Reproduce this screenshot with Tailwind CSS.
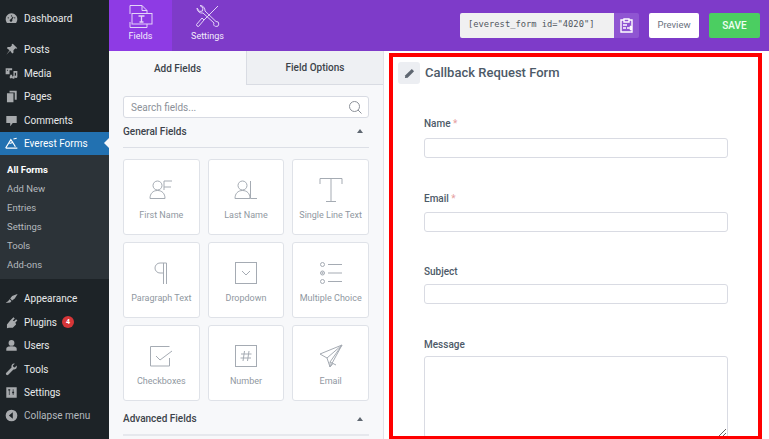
<!DOCTYPE html>
<html lang="en">
<head>
<meta charset="UTF-8">
<title>Everest Forms</title>
<script src="https://cdn.jsdelivr.net/npm/@tailwindcss/browser@4"></script>
</head>
<body class="bg-white font-['Roboto',sans-serif] overflow-hidden">
<div class="flex w-[769px] h-[439px] overflow-hidden">

  <!-- WP sidebar -->
  <aside class="w-[109px] shrink-0 bg-[#1d2327] text-[10px] text-[#e8eaeb] pt-[7.3px]">
    <a class="flex items-center h-[23.4px] pl-[5px] gap-[6px]">
      <svg class="w-[13px] h-[13px] text-[#a7aaad]" viewBox="0 0 20 20" fill="currentColor"><path d="M10 2a9 9 0 0 0-8 13l1 2h14l1-2a9 9 0 0 0-8-13zm0 3a1 1 0 1 1 0 2 1 1 0 0 1 0-2zM5 8a1 1 0 1 1 0 2 1 1 0 0 1 0-2zm10 0a1 1 0 1 1 0 2 1 1 0 0 1 0-2zm-3-1 1 1-2 4a2 2 0 1 1-2-1z"/></svg>
      Dashboard</a>
    <div class="h-[7.6px]"></div>
    <a class="flex items-center h-[23.4px] pl-[5px] gap-[6px]">
      <svg class="w-[13px] h-[13px] text-[#a7aaad]" viewBox="0 0 20 20" fill="currentColor"><path d="M12 1l7 7-2 1-1-1-3 3 0 4-2 1-3-4-6 6 5-7-4-3 1-2 4 0 3-3-1-1z"/></svg>
      Posts</a>
    <a class="flex items-center h-[23.4px] pl-[5px] gap-[6px]">
      <svg class="w-[13px] h-[13px] text-[#a7aaad]" viewBox="0 0 20 20" fill="currentColor"><path d="M1 2h10v3H7v6H1zm2 2v2l2-1zM13 6h6v9a2 2 0 1 1-2-2V9h-2v7a2 2 0 1 1-2-2zM8 12h3v3a2 2 0 1 1-3-1z"/></svg>
      Media</a>
    <a class="flex items-center h-[23.4px] pl-[5px] gap-[6px]">
      <svg class="w-[13px] h-[13px] text-[#a7aaad]" viewBox="0 0 20 20" fill="currentColor"><path d="M7 1h11v14h-3V4H7zM3 5h10v14H3z"/></svg>
      Pages</a>
    <a class="flex items-center h-[23.4px] pl-[5px] gap-[6px]">
      <svg class="w-[13px] h-[13px] text-[#a7aaad]" viewBox="0 0 20 20" fill="currentColor"><path d="M2 3h16v11h-6l-4 5v-5H2z"/></svg>
      Comments</a>
    <a class="relative flex items-center h-[23.4px] pl-[5px] gap-[6px] bg-[#2271b1] text-white">
      <svg class="w-[13px] h-[13px]" viewBox="0 0 20 20" fill="none" stroke="currentColor" stroke-width="1.8"><path d="M1 17 9 4l4 6 3 5M1 17h18M7 10l6-2M13 3l5-1"/></svg>
      Everest Forms
      <span class="absolute right-0 top-[6px] border-y-[5px] border-y-transparent border-r-[5px] border-r-[#f7f8fa]"></span></a>
    <div class="bg-[#2c3338] h-[124px] pt-[5px] text-[#b4b9be] text-[9.5px] pl-[7px]">
      <a class="flex items-center h-[19px] font-bold text-white">All Forms</a>
      <a class="flex items-center h-[19px]">Add New</a>
      <a class="flex items-center h-[19px]">Entries</a>
      <a class="flex items-center h-[19px]">Settings</a>
      <a class="flex items-center h-[19px]">Tools</a>
      <a class="flex items-center h-[19px]">Add-ons</a>
    </div>
    <div class="h-[8px]"></div>
    <a class="flex items-center h-[23.4px] pl-[5px] gap-[6px]">
      <svg class="w-[13px] h-[13px] text-[#a7aaad]" viewBox="0 0 20 20" fill="currentColor"><path d="M19 3l-8 3-3 4 3 3 4-3 4-6zM7 11l3 3-2 2-7 1 4-3z"/></svg>
      Appearance</a>
    <a class="flex items-center h-[23.4px] pl-[5px] gap-[6px]">
      <svg class="w-[13px] h-[13px] text-[#a7aaad]" viewBox="0 0 20 20" fill="currentColor"><path d="M13 2l2 2-3 3 2 1 3-3 2 2-3 3 1 3-5 5H6l-3 1v-6l5-6z"/></svg>
      <span class="flex items-center gap-[5px]">Plugins <span class="w-[12px] h-[12px] rounded-full bg-[#d63638] text-white text-[7px] font-bold flex items-center justify-center">4</span></span></a>
    <a class="flex items-center h-[23.4px] pl-[5px] gap-[6px]">
      <svg class="w-[13px] h-[13px] text-[#a7aaad]" viewBox="0 0 20 20" fill="currentColor"><circle cx="10" cy="6" r="4.5"/><path d="M2 18v-3c0-3 4-4 8-4s8 1 8 4v3z"/></svg>
      Users</a>
    <a class="flex items-center h-[23.4px] pl-[5px] gap-[6px]">
      <svg class="w-[13px] h-[13px] text-[#a7aaad]" viewBox="0 0 20 20" fill="currentColor"><path d="M18 4l-3 3-2-1-1-2 3-3c-3-1-6 2-5 6L2 15a2 2 0 0 0 3 3l8-8c4 1 6-3 5-6z"/></svg>
      Tools</a>
    <a class="flex items-center h-[23.4px] pl-[5px] gap-[6px]">
      <svg class="w-[13px] h-[13px] text-[#a7aaad]" viewBox="0 0 20 20" fill="currentColor"><path fill-rule="evenodd" d="M2 2h16v16H2zM5 5v2h1v7h1V7h1V5zm6 4v2h1v3h1v-3h1V9h-1V5h-1v4z"/></svg>
      Settings</a>
    <a class="flex items-center h-[23.4px] pl-[5px] gap-[6px] text-[#b4b9be]">
      <svg class="w-[13px] h-[13px] text-[#a7aaad]" viewBox="0 0 20 20" fill="currentColor"><path fill-rule="evenodd" d="M10 1a9 9 0 1 1 0 18 9 9 0 0 1 0-18zm2 4-6 5 6 5z"/></svg>
      Collapse menu</a>
  </aside>

  <div class="flex-1 flex flex-col min-w-0">
    <!-- Purple top bar -->
    <header class="h-[51px] shrink-0 bg-[#7e3bc9] flex items-stretch text-[#f3ecfc] text-[9px]">
      <a class="w-[63px] bg-[#8e3be4] flex flex-col items-center pt-[5px]">
        <svg class="w-[24px] h-[23px]" viewBox="0 0 24 23" fill="none" stroke="#e3d4f8"><path d="M1 9V.5h12l5 5v3M13 .5v5h5M1 17v5.500h17V19"/><rect x="3" y="8.500" width="20" height="10.500"/><path d="M9.500 11h6M12.500 11v6M10.500 17h4" stroke-width="1.300"/></svg>
        <span class="mt-[2px] leading-[12px]">Fields</span></a>
      <a class="w-[71px] flex flex-col items-center pt-[5px]">
        <svg class="w-[24px] h-[23px]" viewBox="0 0 24 23" fill="none" stroke="#e3d4f8"><path d="M22 1 8 15M1 21l-.5-1.500L6 13l2 2-5.500 6.500zM1 3a5 5 0 0 0 6 5l11 10a2.500 2.500 0 1 0 2-1.500L9 6a5 5 0 0 0-5-5.500l3 2.500-.5 3-3 .5z"/></svg>
        <span class="mt-[2px] leading-[12px]">Settings</span></a>
      <div class="ml-auto flex items-center pr-[9px] pb-[1px]">
        <div class="w-[154px] h-[25px] bg-[#f0f0f1] rounded-l-[2px] flex items-center pl-[8px] font-['DejaVu_Sans_Mono','Liberation_Mono',monospace] text-[#50575e] text-[8.75px]">[everest_form id="4020"]</div>
        <div class="w-[25px] h-[25px] bg-[#8f55d2] rounded-r-[2px] flex items-center justify-center">
          <svg class="w-[13px] h-[15px]" viewBox="0 0 13 15" fill="none" stroke="#fff" stroke-width="1.400"><path d="M4 2H1v12h11V2H9M4 1h5v3H4zM3 7h4M3 10h3M7 10h5M10 8l2 2-2 2"/></svg>
        </div>
        <button class="w-[50px] h-[25px] ml-[10px] bg-white rounded-[2px] text-[#6b7280] text-[9.5px]">Preview</button>
        <button class="w-[51px] h-[25px] ml-[10px] bg-[#4bce61] rounded-[2px] text-[#f0fff2] text-[10px] font-medium">SAVE</button>
      </div>
    </header>

    <div class="flex-1 flex min-h-0">
      <!-- Field list -->
      <section class="w-[275px] shrink-0 bg-[#f7f8fa] border-r border-[#e1e3ea] overflow-hidden">
        <div class="flex h-[34px] text-[10px] font-medium text-[#3c434a]">
          <div class="w-[137px] flex items-center justify-center">Add Fields</div>
          <div class="flex-1 flex items-center justify-center bg-[#eef0f3] border-l border-b border-[#d9dce3]">Field Options</div>
        </div>
        <div class="px-[14px] pt-[11px]">
          <div class="relative h-[22px] bg-white border border-[#d8dbe3] rounded-[3px] flex items-center pl-[7px] text-[10px] text-[#8c9199]">Search fields...
            <svg class="absolute right-[6px] top-[4px] w-[13px] h-[13px]" viewBox="0 0 13 13" fill="none" stroke="#8c9199"><circle cx="5.500" cy="5.500" r="5"/><path d="m9 9 3.500 3.500"/></svg>
          </div>
          <div class="flex items-center justify-between h-[30px] border-b border-[#dcdfe6] pb-[3px] text-[10px] font-medium text-[#3c434a]">General Fields
            <span class="mr-[6px] border-x-[3px] border-x-transparent border-b-[4px] border-b-[#5f6771]"></span>
          </div>
          <div class="grid grid-cols-3 gap-x-[8px] gap-y-[7px] mt-[11px] text-[9px] text-[#9098a1] text-center">
            <div class="h-[76px] bg-white border border-[#dfe2e8] rounded-[3px] flex flex-col items-center pt-[18px]">
              <svg class="w-[24px] h-[24px]" viewBox="0 0 24 24" fill="none" stroke="#a5abb3"><circle cx="8.500" cy="7.500" r="4.500"/><path d="M1 20.500c0-5 3-8 7.500-8s7.500 3 7.500 8zM15 3h8M15 3v9M15 9h7"/></svg>
              <span class="mt-[7px] leading-[12px]">First Name</span></div>
            <div class="h-[76px] bg-white border border-[#dfe2e8] rounded-[3px] flex flex-col items-center pt-[18px]">
              <svg class="w-[24px] h-[24px]" viewBox="0 0 24 24" fill="none" stroke="#a5abb3"><circle cx="8.500" cy="7.500" r="4.500"/><path d="M1 20.500c0-5 3-8 7.500-8s7.500 3 7.500 8zM16.500 3v17.500H23"/></svg>
              <span class="mt-[7px] leading-[12px]">Last Name</span></div>
            <div class="h-[76px] bg-white border border-[#dfe2e8] rounded-[3px] flex flex-col items-center pt-[18px]">
              <svg class="w-[24px] h-[24px]" viewBox="0 0 24 24" fill="none" stroke="#a5abb3"><path d="M1 6V.5h22V6M12 .5v23M7 23.500h10"/></svg>
              <span class="mt-[7px] leading-[12px]">Single Line Text</span></div>
            <div class="h-[76px] bg-white border border-[#dfe2e8] rounded-[3px] flex flex-col items-center pt-[18px]">
              <svg class="w-[24px] h-[24px]" viewBox="0 0 24 24" fill="none" stroke="#a5abb3"><path d="M17.500 2H11a5 5 0 0 0 0 10h3M14.500 2v21M17.500 2v21"/></svg>
              <span class="mt-[7px] leading-[12px]">Paragraph Text</span></div>
            <div class="h-[76px] bg-white border border-[#dfe2e8] rounded-[3px] flex flex-col items-center pt-[18px]">
              <svg class="w-[24px] h-[24px]" viewBox="0 0 24 24" fill="none" stroke="#a5abb3"><rect x="1.500" y="1.500" width="21" height="21"/><path d="m8 10 4 4 4-4"/></svg>
              <span class="mt-[7px] leading-[12px]">Dropdown</span></div>
            <div class="h-[76px] bg-white border border-[#dfe2e8] rounded-[3px] flex flex-col items-center pt-[18px]">
              <svg class="w-[24px] h-[24px]" viewBox="0 0 24 24" fill="none" stroke="#a5abb3"><circle cx="3.500" cy="3.500" r="2"/><circle cx="3.500" cy="12" r="2"/><circle cx="3.500" cy="12" r=".7"/><circle cx="3.500" cy="20.500" r="2"/><path d="M9 3.500h14M9 12h14M9 20.500h14"/></svg>
              <span class="mt-[7px] leading-[12px]">Multiple Choice</span></div>
            <div class="h-[76px] bg-white border border-[#dfe2e8] rounded-[3px] flex flex-col items-center pt-[18px]">
              <svg class="w-[24px] h-[24px]" viewBox="0 0 24 24" fill="none" stroke="#a5abb3"><path d="M20.500 14v8H1.500V2.500h19M7 12l4 4L23 7"/></svg>
              <span class="mt-[7px] leading-[12px]">Checkboxes</span></div>
            <div class="h-[76px] bg-white border border-[#dfe2e8] rounded-[3px] flex flex-col items-center pt-[18px]">
              <svg class="w-[24px] h-[24px]" viewBox="0 0 24 24" fill="none" stroke="#a5abb3"><rect x="1.500" y="1.500" width="21" height="21"/><path d="M10.500 7 9 17M15 7l-1.500 10M7 10h10.500M6.500 14H17"/></svg>
              <span class="mt-[7px] leading-[12px]">Number</span></div>
            <div class="h-[76px] bg-white border border-[#dfe2e8] rounded-[3px] flex flex-col items-center pt-[18px]">
              <svg class="w-[24px] h-[24px]" viewBox="0 0 24 24" fill="none" stroke="#a5abb3"><path d="M23 1 1 10l7 4 3 9L23 1zM8 14 23 1 11 18l6 3M11 18v5l3-3.500"/></svg>
              <span class="mt-[7px] leading-[12px]">Email</span></div>
          </div>
          <div class="flex items-center justify-between h-[29px] mt-[3px] text-[10px] font-medium text-[#3c434a]">Advanced Fields
            <span class="mr-[6px] border-x-[3px] border-x-transparent border-b-[4px] border-b-[#5f6771]"></span>
          </div>
          <div class="mt-[1px] border-t-2 border-[#e6e8ed]"></div>
        </div>
      </section>

      <!-- Form builder, red highlight round it -->
      <main class="flex-1 min-w-0 pl-[5px] pr-[7px] pt-[2px]">
        <div class="h-[386px] border-[4px] border-b-[3px] border-[#ff0000] overflow-hidden text-[#4d5a68]">
          <div class="flex items-center gap-[5px] pl-[5px] pt-[5px]">
            <span class="w-[22px] h-[22px] bg-[#eceef2] rounded-[3px] flex items-center justify-center">
              <svg class="w-[11px] h-[11px]" viewBox="0 0 12 12" fill="#5f6771"><path d="M8.500 1 11 3.500 4 10.500 1 11l.5-3z"/></svg>
            </span>
            <h1 class="text-[13px] font-medium">Callback Request Form</h1>
          </div>
          <form class="pl-[31px] pr-[30px] pt-[32px] text-[10px] font-medium">
            <label class="block h-[15px] leading-[15px] mb-[7px]">Name <span class="text-[#e5a0a0] font-normal">*</span></label>
            <input class="block w-full h-[20px] bg-white border border-[#d9dbe3] rounded-[3px]">
            <label class="block h-[15px] leading-[15px] mt-[33px] mb-[6px]">Email <span class="text-[#e5a0a0] font-normal">*</span></label>
            <input class="block w-full h-[20px] bg-white border border-[#d9dbe3] rounded-[3px]">
            <label class="block h-[15px] leading-[15px] mt-[32px] mb-[5px]">Subject</label>
            <input class="block w-full h-[20px] bg-white border border-[#d9dbe3] rounded-[3px]">
            <label class="block h-[15px] leading-[15px] mt-[33px] mb-[4px]">Message</label>
            <textarea class="block w-full h-[82px] bg-white border border-[#d9dbe3] rounded-[3px]"></textarea>
          </form>
        </div>
      </main>
    </div>
  </div>
</div>
</body>
</html>
